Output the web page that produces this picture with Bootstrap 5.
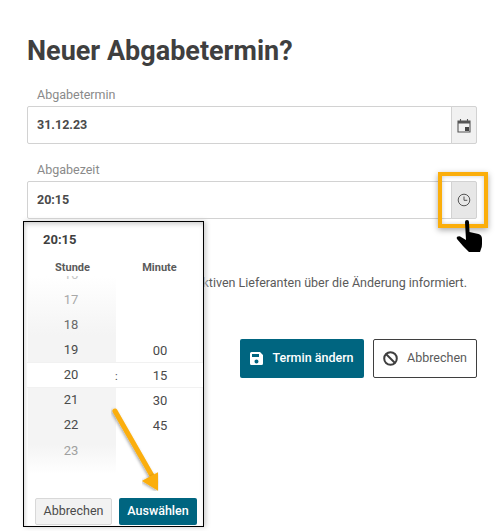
<!DOCTYPE html>
<html lang="de"><head><meta charset="utf-8">
<link href="https://cdn.jsdelivr.net/npm/bootstrap@5.3.0/dist/css/bootstrap.min.css" rel="stylesheet">
<style>
html,body{height:531px;overflow:hidden;background:#fff}
body{font-family:Roboto,"Liberation Sans",sans-serif;color:#3f3f3f;font-size:12.5px}
.stage{position:relative;width:504px;height:531px;padding:36px 27px 0}
.ttl{font-size:27px;font-weight:700;line-height:30px;margin:0 0 21px;color:#3f3f3f}
.lbl{font-size:12.5px;color:#8a8a8a;padding-left:10px;line-height:16px;margin-bottom:3px}
.fld{height:38px;margin-bottom:18px}
.fld .form-control{height:38px;border-color:#d2d2d2;border-radius:2px 0 0 2px;font-size:12.5px;font-weight:700;color:#4a4a4a;padding:0 9px 1px}
.fld .input-group-text{width:26px;padding:0;justify-content:center;background:#f1f1f1;border-color:#d2d2d2;border-radius:0 2px 2px 0}
.fld .on{background:#e7e7e7}
.note{margin-top:56px;white-space:nowrap;font-size:12.5px;line-height:16px;color:#5a5a5a;text-align:right;padding-right:10px}
.acts{margin-top:48px;gap:9px}
.bsave{background:#006580;color:#fff;border:0;border-radius:2px;height:39px;width:124px;font-size:12.5px;font-weight:500;padding:0;gap:9px}
.bcan{background:#fff;color:#5a5a5a;border:1px solid #3f3f3f;border-radius:2px;height:39px;width:104px;font-size:12.5px;padding:0;gap:9px}
.picker{position:absolute;left:23px;top:221px;width:181px;height:306px;background:#fff;border:1.5px solid #000;box-shadow:inset 0 4px 6px -3px #bbb,inset 3px 0 3px -1px #e8e8e8,2px 0 5px #ccc;z-index:2}
.ptime{font-size:13px;font-weight:700;padding:10px 0 0 19px;line-height:16px;color:#3f3f3f}
.heads{margin-top:13px;font-size:11px;font-weight:700;color:#5a5a5a;line-height:14px}
.hcol{width:88px;text-align:center;flex:none;padding-left:9px}
.hcol2{width:88px;text-align:center;flex:none;padding-left:7px}
.wheel{position:relative;height:198px;margin-top:1px;font-size:13px;overflow:hidden}
.wl{position:absolute;left:4px;top:0;width:88px;height:198px;background:linear-gradient(#fff,#f4f4f4 30%,#f4f4f4 85%,#fff)}
.selrow{position:absolute;left:3px;right:0;top:86px;height:26px;background:#fff;border-top:1px solid #f1f1f1;border-bottom:1px solid #f1f1f1}
.num{position:absolute;width:88px;text-align:center;line-height:16px;color:#4a4a4a}
.colh{left:3px}.colm{left:92px}
.num.peek{line-height:10px;top:-6px;color:#c4c4c4}
.sep{position:absolute;left:91px;top:93px;line-height:16px;font-size:11px}
.pbtns{position:absolute;left:11px;bottom:1px;gap:7px}
.pb1{width:77px;height:27px;background:#f2f2f2;border:1px solid #d8d8d8;border-radius:2px;color:#4a4a4a;font-size:12.5px;padding:0}
.pb2{width:78px;height:27px;background:#006580;border:0;border-radius:2px;color:#fff;font-size:12.5px;font-weight:500;padding:0}
.frame{position:absolute;left:438px;top:172px;width:50px;height:56px;border:4px solid #fbae0b;box-shadow:0 2px 6px rgba(0,0,0,.35),inset 0 0 4px rgba(0,0,0,.2);z-index:3}
.ovl{position:absolute;left:0;top:0;z-index:4;pointer-events:none}
</style></head><body>
<div class="stage">
<h1 class="ttl">Neuer Abgabetermin?</h1>
<div class="lbl">Abgabetermin</div>
<div class="input-group fld"><input class="form-control" value="31.12.23"><span class="input-group-text"><svg width="14" height="15" viewBox="0 0 14 15"><path d="M1 3h12v11H1zM3.500 1v3M10.500 1v3" fill="none" stroke="#555" stroke-width="1.100"/><rect x="1" y="3" width="12" height="2.500" fill="#555"/><rect x="8" y="9" width="4" height="4" fill="#444"/></svg></span></div>
<div class="lbl">Abgabezeit</div>
<div class="input-group fld"><input class="form-control" value="20:15"><span class="input-group-text on"><svg width="14" height="14" viewBox="0 0 14 14"><circle cx="7" cy="7" r="5.800" fill="none" stroke="#555" stroke-width="1"/><path d="M7 3.500V7.300H10.300" fill="none" stroke="#555" stroke-width="1"/></svg></span></div>
<div class="note">Nach Änderung werden alle aktiven Lieferanten über die Änderung informiert.</div>
<div class="d-flex justify-content-end acts">
<button class="btn bsave d-flex align-items-center justify-content-center"><svg width="13" height="13" viewBox="0 0 13 13"><path fill-rule="evenodd" d="M1.500 0H10l3 3v8.500A1.500 1.500 0 0 1 11.500 13h-10A1.500 1.500 0 0 1 0 11.500v-10A1.500 1.500 0 0 1 1.500 0zM2 2v3h7V2zM6.500 7.500a2 2 0 1 0 0 4 2 2 0 0 0 0-4z" fill="#fff"/></svg>Termin ändern</button>
<button class="btn bcan d-flex align-items-center justify-content-center"><svg width="15" height="15" viewBox="0 0 15 15"><circle cx="7.500" cy="7.500" r="6.300" fill="none" stroke="#3f3f3f" stroke-width="2"/><path d="M3 3l9 9" stroke="#3f3f3f" stroke-width="2"/></svg>Abbrechen</button>
</div>
<div class="picker">
<div class="ptime">20:15</div>
<div class="d-flex heads"><div class="hcol">Stunde</div><div class="hcol2">Minute</div></div>
<div class="wheel">
<div class="wl"></div><div class="selrow"></div>
<div class="num colh peek">16</div>
<div class="num colh" style="top:16px;color:#a8a8a8">17</div>
<div class="num colh" style="top:41px;color:#6a6a6a">18</div>
<div class="num colh" style="top:66px">19</div>
<div class="num colh" style="top:91px">20</div>
<div class="num colh" style="top:116px">21</div>
<div class="num colh" style="top:141px">22</div>
<div class="num colh" style="top:167px;color:#a0a0a0">23</div>
<div class="num colm" style="top:67px">00</div>
<div class="num colm" style="top:92px">15</div>
<div class="num colm" style="top:117px">30</div>
<div class="num colm" style="top:142px">45</div>
<div class="sep">:</div>
</div>
<div class="d-flex pbtns"><button class="btn pb1">Abbrechen</button><button class="btn pb2">Auswählen</button></div>
</div>
<div class="frame"></div>
<svg class="ovl" width="504" height="531" viewBox="0 0 504 531"><defs><filter id="s"><feDropShadow dx="-1" dy="1" stdDeviation="1.500" flood-opacity=".35"/></filter></defs>
<path d="M115 411L155 481" stroke="#fbae0b" stroke-width="5" stroke-linecap="round" filter="url(#s)"/><path d="M144 481L157 474L157 489Z" fill="#fbae0b" stroke="#fbae0b" stroke-width="2" filter="url(#s)"/>
<path d="M465 222q0-2 2-2t2 2l.5 10 9 2q3.500 1 3.500 5v5q0 3-1 5l-1 3h-11l-6-6-6-7q-1-2 1-2.500t3 .5l5 3z" fill="#000"/></svg>
</div>
</body></html>
